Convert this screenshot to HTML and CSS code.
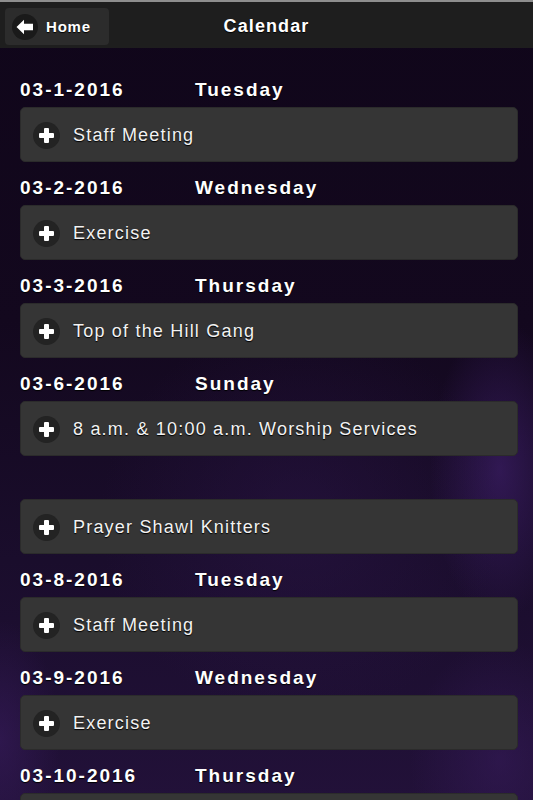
FILE: index.html
```html
<!DOCTYPE html>
<html>
<head>
<meta charset="utf-8">
<title>Calendar</title>
<link rel="stylesheet" href="styles.css">
</head>
<body>
<header class="topbar">
  <a class="home-btn" href="#">
    <span class="home-icon">
      <svg width="18" height="16" viewBox="0 0 18 16"><path d="M0.5 8 L8 0.8 L8 4.8 L17 4.8 L17 11.2 L8 11.2 L8 15.2 Z" fill="#fff"/></svg>
    </span>
    <span class="home-label">Home</span>
  </a>
  <h1 class="title">Calendar</h1>
</header>
<main class="list">
  <div class="day"><span class="date">03-1-2016</span><span class="weekday">Tuesday</span></div>
  <div class="event"><span class="plus"></span><span class="event-name">Staff Meeting</span></div>

  <div class="day"><span class="date">03-2-2016</span><span class="weekday">Wednesday</span></div>
  <div class="event"><span class="plus"></span><span class="event-name">Exercise</span></div>

  <div class="day"><span class="date">03-3-2016</span><span class="weekday">Thursday</span></div>
  <div class="event"><span class="plus"></span><span class="event-name">Top of the Hill Gang</span></div>

  <div class="day"><span class="date">03-6-2016</span><span class="weekday">Sunday</span></div>
  <div class="event"><span class="plus"></span><span class="event-name">8 a.m. &amp; 10:00 a.m. Worship Services</span></div>

  <div class="day"></div>
  <div class="event"><span class="plus"></span><span class="event-name">Prayer Shawl Knitters</span></div>

  <div class="day"><span class="date">03-8-2016</span><span class="weekday">Tuesday</span></div>
  <div class="event"><span class="plus"></span><span class="event-name">Staff Meeting</span></div>

  <div class="day"><span class="date">03-9-2016</span><span class="weekday">Wednesday</span></div>
  <div class="event"><span class="plus"></span><span class="event-name">Exercise</span></div>

  <div class="day"><span class="date">03-10-2016</span><span class="weekday">Thursday</span></div>
  <div class="event"><span class="plus"></span></div>
</main>
</body>
</html>
```
FILE: styles.css
```css
* { box-sizing: border-box; }
html, body { margin: 0; padding: 0; }
body {
  width: 533px;
  height: 800px;
  overflow: hidden;
  font-family: "Liberation Sans", Arial, sans-serif;
  color: #fff;
  background:
    radial-gradient(ellipse 70px 150px at 500px 470px, rgba(70,35,120,0.55), rgba(0,0,0,0)),
    radial-gradient(ellipse 90px 120px at 500px 760px, rgba(60,30,100,0.45), rgba(0,0,0,0)),
    radial-gradient(ellipse 200px 200px at 300px 520px, rgba(45,22,75,0.45), rgba(0,0,0,0)),
    radial-gradient(ellipse 60px 120px at 0px 740px, rgba(60,30,100,0.5), rgba(0,0,0,0)),
    linear-gradient(180deg, #10061a 0%, #13081e 40%, #1a0d2c 70%, #221139 100%);
}
.topbar {
  position: relative;
  height: 48px;
  background: #1e1e1e;
  border-top: 2px solid #8e8e8e;
  display: flex;
  align-items: center;
  padding: 0 5px;
}
.home-btn {
  display: flex;
  align-items: center;
  width: 104px;
  height: 37px;
  margin-top: 3px;
  background: #2c2c2c;
  border-radius: 4px;
  text-decoration: none;
  color: #fff;
  padding-left: 7px;
  gap: 8px;
}
.home-icon {
  width: 26px;
  height: 26px;
  border-radius: 50%;
  background: #1a1a1a;
  display: flex;
  align-items: center;
  justify-content: center;
}
.home-label {
  font-weight: bold;
  font-size: 15px;
  letter-spacing: 0.8px;
  text-shadow: 0 1px 1px #000;
}
.title {
  position: absolute;
  left: 0;
  right: 0;
  top: 13px;
  margin: 0;
  text-align: center;
  font-size: 18px;
  font-weight: bold;
  letter-spacing: 1.1px;
  line-height: 22px;
  text-shadow: 0 1px 1px #000;
  pointer-events: none;
}
.list {
  padding: 16px 15px 0 20px;
}
.day {
  height: 43px;
  display: flex;
  align-items: flex-end;
  padding-bottom: 6px;
  font-weight: bold;
  font-size: 19px;
  line-height: 22px;
  letter-spacing: 2px;
  text-shadow: 0 1px 1px #000;
}
.date { width: 175px; }
.event {
  height: 55px;
  background: #353535;
  border: 1px solid #2b2b2b;
  border-radius: 5px;
  display: flex;
  align-items: center;
  padding: 2px 0 0 12px;
  gap: 13px;
}
.plus {
  position: relative;
  width: 27px;
  height: 27px;
  border-radius: 50%;
  background: #232323;
  flex: none;
}
.plus::before, .plus::after {
  content: "";
  position: absolute;
  background: #fff;
  border-radius: 1px;
}
.plus::before { left: 6px; top: 11px; width: 15px; height: 5px; }
.plus::after { left: 11px; top: 6px; width: 5px; height: 15px; }
.event-name {
  font-size: 18px;
  letter-spacing: 1.2px;
  color: #f2f2f2;
  text-shadow: 0 1px 1px #000;
}
```
